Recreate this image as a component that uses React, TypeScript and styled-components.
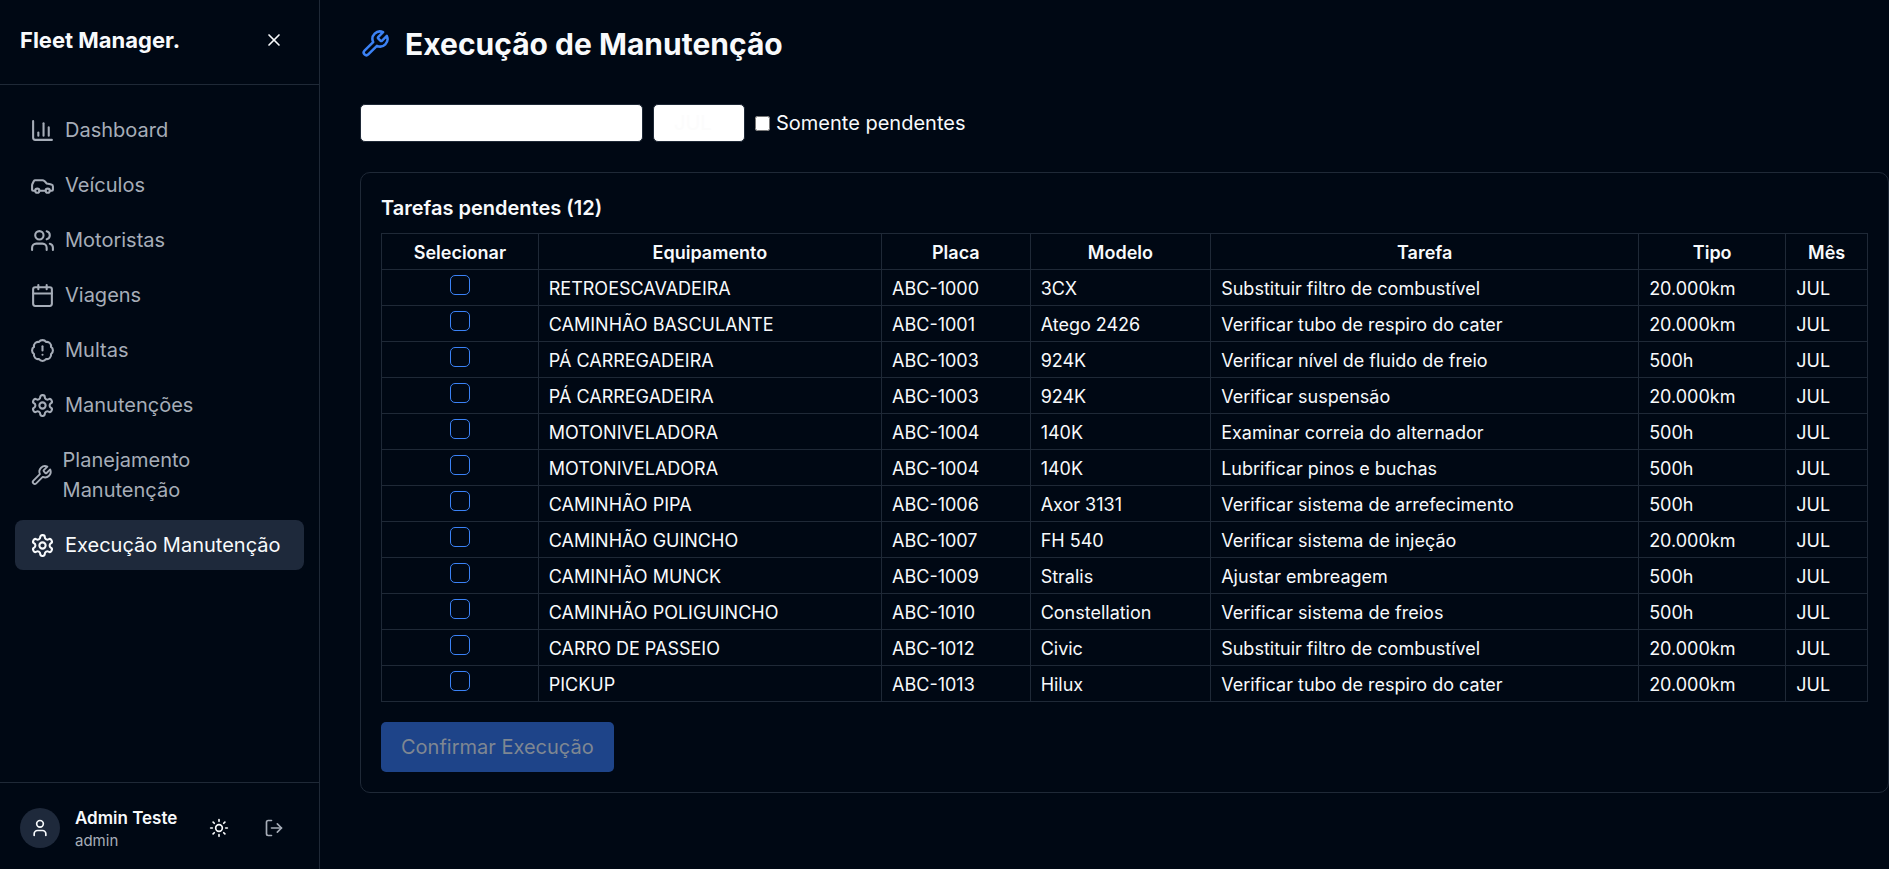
import React, { useState } from "react";
import styled, { createGlobalStyle, css } from "styled-components";
import {
  BadgeAlert,
  Calendar,
  Car,
  ChartColumn,
  LogOut,
  Sun,
  User,
  Users,
  X,
} from "lucide-react";

const color = {
  page: "#000814",
  line: "#1f2937",
  raised: "#1e293b",
  text: "#f8fafc",
  muted: "#a6adb8",
  accent: "#3b82f6",
};

const GlobalStyle = createGlobalStyle`
  *, *::before, *::after { box-sizing: border-box; }
  body {
    margin: 0;
    background: ${color.page};
    color: ${color.text};
    font-family: Inter, "Liberation Sans", sans-serif;
    font-size: 20px;
    line-height: 30px;
  }
  button, input, select { font: inherit; }
  h1, h2, p { margin: 0; }
`;

const StrokeIcon = styled.svg.attrs({
  viewBox: "0 0 24 24",
  fill: "none",
  stroke: "currentColor",
  strokeWidth: 2,
  strokeLinecap: "round",
  strokeLinejoin: "round",
  "aria-hidden": true,
})``;

function Wrench({ size }: { size: number }) {
  return (
    <StrokeIcon width={size} height={size}>
      <path d="M14.7 6.3a1 1 0 0 0 0 1.4l1.6 1.6a1 1 0 0 0 1.4 0l3.77-3.77a6 6 0 0 1-7.94 7.94l-6.91 6.91a2.12 2.12 0 0 1-3-3l6.91-6.91a6 6 0 0 1 7.94-7.94l-3.76 3.76z" />
    </StrokeIcon>
  );
}

function Gear({ size }: { size: number }) {
  return (
    <StrokeIcon width={size} height={size}>
      <path d="M12.22 2h-.44a2 2 0 0 0-2 2v.18a2 2 0 0 1-1 1.73l-.43.25a2 2 0 0 1-2 0l-.15-.08a2 2 0 0 0-2.73.73l-.22.38a2 2 0 0 0 .73 2.73l.15.1a2 2 0 0 1 1 1.72v.51a2 2 0 0 1-1 1.74l-.15.09a2 2 0 0 0-.73 2.73l.22.38a2 2 0 0 0 2.73.73l.15-.08a2 2 0 0 1 2 0l.43.25a2 2 0 0 1 1 1.73V20a2 2 0 0 0 2 2h.44a2 2 0 0 0 2-2v-.18a2 2 0 0 1 1-1.73l.43-.25a2 2 0 0 1 2 0l.15.08a2 2 0 0 0 2.73-.73l.22-.39a2 2 0 0 0-.73-2.73l-.15-.08a2 2 0 0 1-1-1.74v-.5a2 2 0 0 1 1-1.74l.15-.09a2 2 0 0 0 .73-2.73l-.22-.38a2 2 0 0 0-2.73-.73l-.15.08a2 2 0 0 1-2 0l-.43-.25a2 2 0 0 1-1-1.73V4a2 2 0 0 0-2-2z" />
      <circle cx="12" cy="12" r="3" />
    </StrokeIcon>
  );
}

const Shell = styled.div`
  display: flex;
  min-height: 100vh;
`;

const Sidebar = styled.aside`
  display: flex;
  flex-direction: column;
  flex: 0 0 320px;
  border-right: 1px solid ${color.line};
`;

const SidebarHeader = styled.header`
  display: flex;
  align-items: center;
  justify-content: space-between;
  padding: 20px 20px 24px;
  border-bottom: 1px solid ${color.line};
`;

const Brand = styled.span`
  font-size: 22px;
  line-height: 40px;
  font-weight: 700;
`;

const IconButton = styled.button<{ $muted?: boolean; $tall?: boolean }>`
  display: inline-flex;
  align-items: center;
  justify-content: center;
  width: 50px;
  height: ${(p) => (p.$tall ? 50 : 40)}px;
  padding: 0;
  border: 0;
  border-radius: 8px;
  background: none;
  color: ${(p) => (p.$muted ? color.muted : color.text)};
  cursor: pointer;
`;

const Nav = styled.nav`
  display: flex;
  flex-direction: column;
  flex: 1;
  gap: 5px;
  padding: 20px 15px;
`;

const NavLink = styled.a<{ $active?: boolean }>`
  display: flex;
  align-items: center;
  gap: 10px;
  padding: 10px 15px;
  border-radius: 8px;
  color: ${color.muted};
  text-decoration: none;
  ${(p) =>
    p.$active &&
    css`
      background: ${color.raised};
      color: ${color.text};
    `}
`;

const UserBar = styled.footer`
  display: flex;
  align-items: center;
  gap: 5px;
  padding: 20px 20px 16px;
  border-top: 1px solid ${color.line};
`;

const Avatar = styled.span`
  display: flex;
  align-items: center;
  justify-content: center;
  width: 40px;
  height: 40px;
  border-radius: 50%;
  background: ${color.raised};
`;

const UserInfo = styled.div`
  flex: 1;
  margin-left: 10px;
`;

const UserName = styled.p`
  font-size: 17px;
  line-height: 25px;
  font-weight: 600;
  white-space: nowrap;
`;

const UserRole = styled.p`
  font-size: 15px;
  line-height: 20px;
  color: ${color.muted};
`;

const Main = styled.main`
  flex: 1;
  min-width: 0;
  padding: 24px 0 24px 40px;
`;

const PageTitle = styled.h1`
  display: flex;
  align-items: center;
  gap: 15px;
  font-size: 30px;
  line-height: 40px;
  font-weight: 700;
  svg { color: ${color.accent}; }
`;

const Filters = styled.div`
  display: flex;
  align-items: center;
  gap: 10px;
  margin-top: 40px;
`;

const Select = styled.select<{ $width: number }>`
  width: ${(p) => p.$width}px;
  height: 38px;
  padding: 0 20px;
  border: 1px solid ${color.line};
  border-radius: 5px;
  background: #fff;
  color: #fcfcfc;
  appearance: none;
`;

const CheckLabel = styled.label`
  display: flex;
  align-items: center;
  gap: 6px;
`;

const FilterCheck = styled.input`
  width: 15px;
  height: 15px;
  margin: 0;
`;

const Card = styled.section`
  margin-top: 30px;
  padding: 20px;
  border: 1px solid ${color.line};
  border-radius: 10px;
`;

const CardTitle = styled.h2`
  margin-bottom: 10px;
  font-size: 20px;
  line-height: 30px;
  font-weight: 600;
`;

const Table = styled.table`
  width: 100%;
  border-collapse: collapse;
  table-layout: fixed;
  font-size: 18px;
  line-height: 25px;
`;

const Column = styled.col<{ $share: number }>`
  width: ${(p) => p.$share}%;
`;

const Head = styled.th`
  height: 36px;
  padding: 6px 10px 4px;
  border: 1px solid ${color.line};
  font-weight: 600;
`;

const Cell = styled.td<{ $center?: boolean }>`
  height: 36px;
  padding: ${(p) => (p.$center ? "5px 10px 10px" : "6px 10px 4px")};
  border: 1px solid ${color.line};
  text-align: ${(p) => (p.$center ? "center" : "left")};
`;

const RowCheck = styled.input`
  display: block;
  width: 20px;
  height: 20px;
  margin: 0 auto;
  border: 1px solid ${color.accent};
  border-radius: 5px;
  background: transparent;
  appearance: none;
  &:checked { background: ${color.accent}; }
`;

const ConfirmButton = styled.button`
  margin-top: 20px;
  padding: 10px 20px;
  border: 0;
  border-radius: 5px;
  background: #2563eb;
  color: #fff;
  &:disabled {
    background: #1e4489;
    color: #7f8792;
  }
`;

const links = [
  { label: "Dashboard", icon: ChartColumn },
  { label: "Veículos", icon: Car },
  { label: "Motoristas", icon: Users },
  { label: "Viagens", icon: Calendar },
  { label: "Multas", icon: BadgeAlert },
  { label: "Manutenções", icon: Gear },
  { label: "Planejamento Manutenção", icon: Wrench },
  { label: "Execução Manutenção", icon: Gear, active: true },
];

const columns = [
  { title: "Selecionar", share: 10.55 },
  { title: "Equipamento", share: 23.1 },
  { title: "Placa", share: 10 },
  { title: "Modelo", share: 12.15 },
  { title: "Tarefa", share: 28.8 },
  { title: "Tipo", share: 9.9 },
  { title: "Mês", share: 5.5 },
];

const tasks = [
  ["RETROESCAVADEIRA", "ABC-1000", "3CX", "Substituir filtro de combustível", "20.000km", "JUL"],
  ["CAMINHÃO BASCULANTE", "ABC-1001", "Atego 2426", "Verificar tubo de respiro do cater", "20.000km", "JUL"],
  ["PÁ CARREGADEIRA", "ABC-1003", "924K", "Verificar nível de fluido de freio", "500h", "JUL"],
  ["PÁ CARREGADEIRA", "ABC-1003", "924K", "Verificar suspensão", "20.000km", "JUL"],
  ["MOTONIVELADORA", "ABC-1004", "140K", "Examinar correia do alternador", "500h", "JUL"],
  ["MOTONIVELADORA", "ABC-1004", "140K", "Lubrificar pinos e buchas", "500h", "JUL"],
  ["CAMINHÃO PIPA", "ABC-1006", "Axor 3131", "Verificar sistema de arrefecimento", "500h", "JUL"],
  ["CAMINHÃO GUINCHO", "ABC-1007", "FH 540", "Verificar sistema de injeção", "20.000km", "JUL"],
  ["CAMINHÃO MUNCK", "ABC-1009", "Stralis", "Ajustar embreagem", "500h", "JUL"],
  ["CAMINHÃO POLIGUINCHO", "ABC-1010", "Constellation", "Verificar sistema de freios", "500h", "JUL"],
  ["CARRO DE PASSEIO", "ABC-1012", "Civic", "Substituir filtro de combustível", "20.000km", "JUL"],
  ["PICKUP", "ABC-1013", "Hilux", "Verificar tubo de respiro do cater", "20.000km", "JUL"],
];

export default function App() {
  const [selected, setSelected] = useState<number[]>([]);
  const toggle = (index: number) =>
    setSelected((list) =>
      list.includes(index) ? list.filter((i) => i !== index) : [...list, index],
    );

  return (
    <>
      <GlobalStyle />
      <Shell>
        <Sidebar>
          <SidebarHeader>
            <Brand>Fleet Manager.</Brand>
            <IconButton type="button" aria-label="Fechar menu">
              <X size={20} />
            </IconButton>
          </SidebarHeader>
          <Nav>
            {links.map(({ label, icon: Icon, active }) => (
              <NavLink key={label} href="#" $active={active}>
                <Icon size={25} />
                <span>{label}</span>
              </NavLink>
            ))}
          </Nav>
          <UserBar>
            <Avatar>
              <User size={20} />
            </Avatar>
            <UserInfo>
              <UserName>Admin Teste</UserName>
              <UserRole>admin</UserRole>
            </UserInfo>
            <IconButton type="button" aria-label="Alternar tema" $tall>
              <Sun size={20} />
            </IconButton>
            <IconButton type="button" aria-label="Sair" $muted $tall>
              <LogOut size={20} />
            </IconButton>
          </UserBar>
        </Sidebar>
        <Main>
          <PageTitle>
            <Wrench size={30} />
            Execução de Manutenção
          </PageTitle>
          <Filters>
            <Select $width={283} aria-label="Equipamento" />
            <Select $width={92} aria-label="Mês">
              <option>JUL</option>
            </Select>
            <CheckLabel>
              <FilterCheck type="checkbox" />
              Somente pendentes
            </CheckLabel>
          </Filters>
          <Card>
            <CardTitle>Tarefas pendentes (12)</CardTitle>
            <Table>
              <colgroup>
                {columns.map((c) => (
                  <Column key={c.title} $share={c.share} />
                ))}
              </colgroup>
              <thead>
                <tr>
                  {columns.map((c) => (
                    <Head key={c.title} scope="col">{c.title}</Head>
                  ))}
                </tr>
              </thead>
              <tbody>
                {tasks.map((task, index) => (
                  <tr key={index}>
                    <Cell $center>
                      <RowCheck
                        type="checkbox"
                        aria-label={`Selecionar ${task[0]}: ${task[3]}`}
                        checked={selected.includes(index)}
                        onChange={() => toggle(index)}
                      />
                    </Cell>
                    {task.map((value, i) => (
                      <Cell key={i}>{value}</Cell>
                    ))}
                  </tr>
                ))}
              </tbody>
            </Table>
            <ConfirmButton type="button" disabled={selected.length === 0}>
              Confirmar Execução
            </ConfirmButton>
          </Card>
        </Main>
      </Shell>
    </>
  );
}
